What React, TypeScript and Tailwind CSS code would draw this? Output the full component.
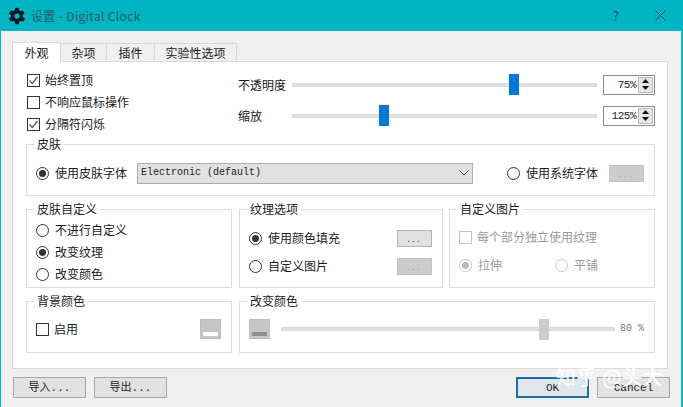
const font = { fontFamily: '"Noto Sans CJK SC","Noto Sans",sans-serif' };

function Check({ checked, disabled, label }: { checked?: boolean; disabled?: boolean; label: string }) {
  return (
    <div className={`flex items-center gap-[5px] h-[22px] ${disabled ? "text-[#9a9a9a]" : "text-[#1a1a1a]"}`}>
      <svg width="13" height="13" viewBox="0 0 13 13" className="shrink-0">
        <rect x="0.5" y="0.5" width="12" height="12" fill="#fff" stroke={disabled ? "#c4c4c4" : "#333"} />
        {checked && <path d="M2.5 6.5 L5.2 9.5 L10.5 3" fill="none" stroke="#555" strokeWidth="1.2" />}
      </svg>
      <span>{label}</span>
    </div>
  );
}

function Radio({ checked, disabled, label }: { checked?: boolean; disabled?: boolean; label: string }) {
  return (
    <div className={`flex items-center gap-[6px] h-[22px] ${disabled ? "text-[#9a9a9a]" : "text-[#1a1a1a]"}`}>
      <svg width="13" height="13" viewBox="0 0 13 13" className="shrink-0">
        <circle cx="6.5" cy="6.5" r="6" fill="#fff" stroke={disabled ? "#c4c4c4" : "#333"} />
        {checked && <circle cx="6.5" cy="6.5" r="3.5" fill={disabled ? "#bbb" : "#333"} />}
      </svg>
      <span>{label}</span>
    </div>
  );
}

function Dots({ disabled }: { disabled?: boolean }) {
  return (
    <div
      className={`w-[35px] h-[17px] shrink-0 flex items-center justify-center border text-[10px] tracking-[2px] ${
        disabled ? "bg-[#cccccc] border-[#c4c4c4] text-[#a8a8a8]" : "bg-[#e1e1e1] border-[#b4b4b4] text-[#555]"
      }`}
    >
      ...
    </div>
  );
}

function Group({ title, className, children }: { title: string; className?: string; children: React.ReactNode }) {
  return (
    <fieldset className={`border border-[#dcdcdc] min-w-0 pl-[9px] pr-[10px] ${className ?? ""}`}>
      <legend className="ml-[-2px] px-[3px] h-[18px] leading-[18px] text-[#1a1a1a]">{title}</legend>
      {children}
    </fieldset>
  );
}

function Track({ thumb, color, className }: { thumb: number; color: string; className: string }) {
  return (
    <div className={`relative h-[21px] flex items-center ${className}`}>
      <div className="w-full h-[4px] bg-[#e0e0e0] border border-[#dadada]" />
      <div className="absolute top-0 w-[10px] h-[21px]" style={{ left: thumb, background: color }} />
    </div>
  );
}

function Spin({ value }: { value: string }) {
  return (
    <div className="w-[52px] h-[20px] ml-[6px] border border-[#8c8c8c] bg-white flex items-center shrink-0">
      <span className="flex-1 text-right text-[11px] text-[#222] pr-[2px]" style={{ fontFamily: '"Liberation Mono",monospace', letterSpacing: "-0.5px" }}>
        {value}
      </span>
      <div className="w-[15px] h-[16px] mr-[1px] bg-[#e6e6e6] border border-[#bcbcbc] flex flex-col items-center justify-around">
        <svg width="7" height="4" viewBox="0 0 7 4"><path d="M3.5 0 L7 4 H0 Z" fill="#111" /></svg>
        <svg width="7" height="4" viewBox="0 0 7 4"><path d="M3.5 4 L7 0 H0 Z" fill="#111" /></svg>
      </div>
    </div>
  );
}

function Swatch({ bar }: { bar: string }) {
  return (
    <div className="w-[21px] h-[20px] bg-[#c6c6c6] border border-[#bdbdbd] flex items-end justify-center pb-[2px] shrink-0">
      <div className="w-[15px] h-[4px] rounded-[1px]" style={{ background: bar }} />
    </div>
  );
}

function Btn({ label, active, className }: { label: string; active?: boolean; className?: string }) {
  return (
    <div
      className={`w-[73px] h-[21px] flex items-center justify-center text-[#222] ${
        active ? "border-2 border-[#1c6ea4] bg-[#dfe6ec]" : "border border-[#a8a8a8] bg-[#e1e1e1]"
      } ${className ?? ""}`}
      style={{ fontFamily: '"Liberation Mono","Noto Sans CJK SC",monospace', fontSize: 11 }}
    >
      {label}
    </div>
  );
}

export default function App() {
  return (
    <div className="relative w-[683px] h-[407px] overflow-hidden bg-[#f0f0f0] text-[12px] leading-[18px] flex flex-col" style={font}>
      <div className="h-[31px] bg-[#00b5c3] flex items-center pl-[8px] pr-[17px] shrink-0">
        <svg width="18" height="18" viewBox="3.4 2.4 17.2 19.2" className="shrink-0">
          <path
            fill="#0a1a22"
            d="M19.4 13a7.6 7.6 0 0 0 0-2l2.1-1.6-2-3.5-2.5 1a7.6 7.6 0 0 0-1.7-1L15.4 3.2h-4l-.4 2.7a7.6 7.6 0 0 0-1.7 1l-2.5-1-2 3.5L6.9 11a7.6 7.6 0 0 0 0 2l-2.1 1.6 2 3.5 2.5-1c.5.4 1.1.7 1.7 1l.4 2.7h4l.4-2.7c.6-.3 1.2-.6 1.7-1l2.5 1 2-3.5zM13.4 14.8a2.8 2.8 0 1 1 0-5.6 2.8 2.8 0 0 1 0 5.6z"
            transform="translate(-1.4 0)"
          />
        </svg>
        <span className="ml-[5px] text-[#2a5a66] text-[12px] tracking-[0.35px]" style={{ fontFamily: '"Noto Sans CJK SC","Open Sans",sans-serif' }}>
          设置 - Digital Clock
        </span>
        <span className="ml-auto text-[#1d4c58] text-[13px] mr-[36px]">?</span>
        <svg width="11" height="11" viewBox="0 0 11 11">
          <path d="M0.5 0.5 L10.5 10.5 M10.5 0.5 L0.5 10.5" stroke="#1d4c58" strokeWidth="1" />
        </svg>
      </div>

      <div className="flex-1 flex flex-col border-l border-l-[#00b5c3] border-r-2 border-r-[#00b5c3] pl-[11px] pr-[11px]">
        <div className="flex items-end h-[30px] shrink-0 text-[#1a1a1a]">
          <div className="relative z-10 w-[49px] h-[20px] mb-[-1px] bg-white border border-[#d9d9d9] border-b-0 flex items-center justify-center">外观</div>
          <div className="w-[46px] h-[18px] border border-[#d9d9d9] border-l-0 border-b-0 flex items-center justify-center">杂项</div>
          <div className="w-[48px] h-[18px] border border-[#d9d9d9] border-l-0 border-b-0 flex items-center justify-center">插件</div>
          <div className="w-[82px] h-[18px] border border-[#d9d9d9] border-l-0 border-b-0 flex items-center justify-center">实验性选项</div>
        </div>

        <div className="h-[308px] bg-white border border-[#d9d9d9] pl-[13px] pr-[12px] mr-[2px] shrink-0">
          <div className="flex h-[74px] pt-[7px]">
            <div className="w-[212px] shrink-0 pl-[1px]">
              <Check checked label="始终置顶" />
              <Check label="不响应鼠标操作" />
              <Check checked label="分隔符闪烁" />
            </div>
            <div className="flex-1 flex flex-col gap-[10px] pt-[5px]">
              <div className="flex items-center h-[21px]">
                <span className="w-[54px] shrink-0 text-[#1a1a1a]">不透明度</span>
                <Track thumb={217} color="#0078d7" className="flex-1" />
                <Spin value="75%" />
              </div>
              <div className="flex items-center h-[21px]">
                <span className="w-[54px] shrink-0 text-[#1a1a1a]">缩放</span>
                <Track thumb={87} color="#0078d7" className="flex-1" />
                <Spin value="125%" />
              </div>
            </div>
          </div>

          <Group title="皮肤" className="h-[61px] mt-[-1px]">
            <div className="flex items-center h-[22px] mt-[9px]">
              <Radio checked label="使用皮肤字体" />
              <div className="ml-[10px] w-[336px] h-[21px] bg-[#e1e1e1] border border-[#adadad] flex items-center pl-[3px] pr-[3px] text-[10px] text-[#222] shrink-0" style={{ fontFamily: '"Liberation Mono",monospace' }}>
                <span className="flex-1">Electronic (default)</span>
                <svg width="10" height="6" viewBox="0 0 10 6"><path d="M0.5 0.5 L5 5 L9.5 0.5" fill="none" stroke="#444" /></svg>
              </div>
              <div className="ml-[34px]"><Radio label="使用系统字体" /></div>
              <div className="ml-[11px]"><Dots disabled /></div>
            </div>
          </Group>

          <div className="flex mt-[4px] h-[88px]">
            <Group title="皮肤自定义" className="w-[206px] shrink-0">
              <div className="mt-[1px]">
                <Radio label="不进行自定义" />
                <Radio checked label="改变纹理" />
                <Radio label="改变颜色" />
              </div>
            </Group>
            <Group title="纹理选项" className="w-[204px] ml-[7px] shrink-0">
              <div className="flex items-center justify-between h-[22px] mt-[9px]">
                <Radio checked label="使用颜色填充" />
                <Dots />
              </div>
              <div className="flex items-center justify-between h-[22px] mt-[6px]">
                <Radio label="自定义图片" />
                <Dots disabled />
              </div>
            </Group>
            <Group title="自定义图片" className="flex-1 ml-[6px] min-w-0">
              <div className="mt-[8px]"><Check disabled label="每个部分独立使用纹理" /></div>
              <div className="flex mt-[6px]">
                <div className="w-[96px]"><Radio checked disabled label="拉伸" /></div>
                <Radio disabled label="平铺" />
              </div>
            </Group>
          </div>

          <div className="flex gap-[7px] mt-[4px] h-[61px]">
            <Group title="背景颜色" className="w-[206px] shrink-0">
              <div className="flex items-center justify-between h-[22px] mt-[8px]">
                <Check label="启用" />
                <Swatch bar="#ffffff" />
              </div>
            </Group>
            <Group title="改变颜色" className="flex-1 min-w-0">
              <div className="flex items-center h-[22px] mt-[8px]">
                <Swatch bar="#8e8e8e" />
                <Track thumb={258} color="#cccccc" className="ml-[11px] w-[334px]" />
                <span className="ml-[5px] text-[10px] text-[#777]" style={{ fontFamily: '"Liberation Mono",monospace' }}>80 %</span>
              </div>
            </Group>
          </div>
        </div>

        <div className="flex mt-[8px] pl-[1px]">
          <Btn label="导入..." />
          <Btn label="导出..." className="ml-[8px]" />
          <Btn label="OK" active className="ml-auto" />
          <Btn label="Cancel" className="ml-[8px]" />
        </div>
      </div>

      <div className="absolute left-[556px] top-[364px] text-[20px] leading-[26px] tracking-[0.5px] text-white/90 whitespace-nowrap" style={{ fontWeight: 500 }}>
        知乎 @头大
      </div>
    </div>
  );
}
